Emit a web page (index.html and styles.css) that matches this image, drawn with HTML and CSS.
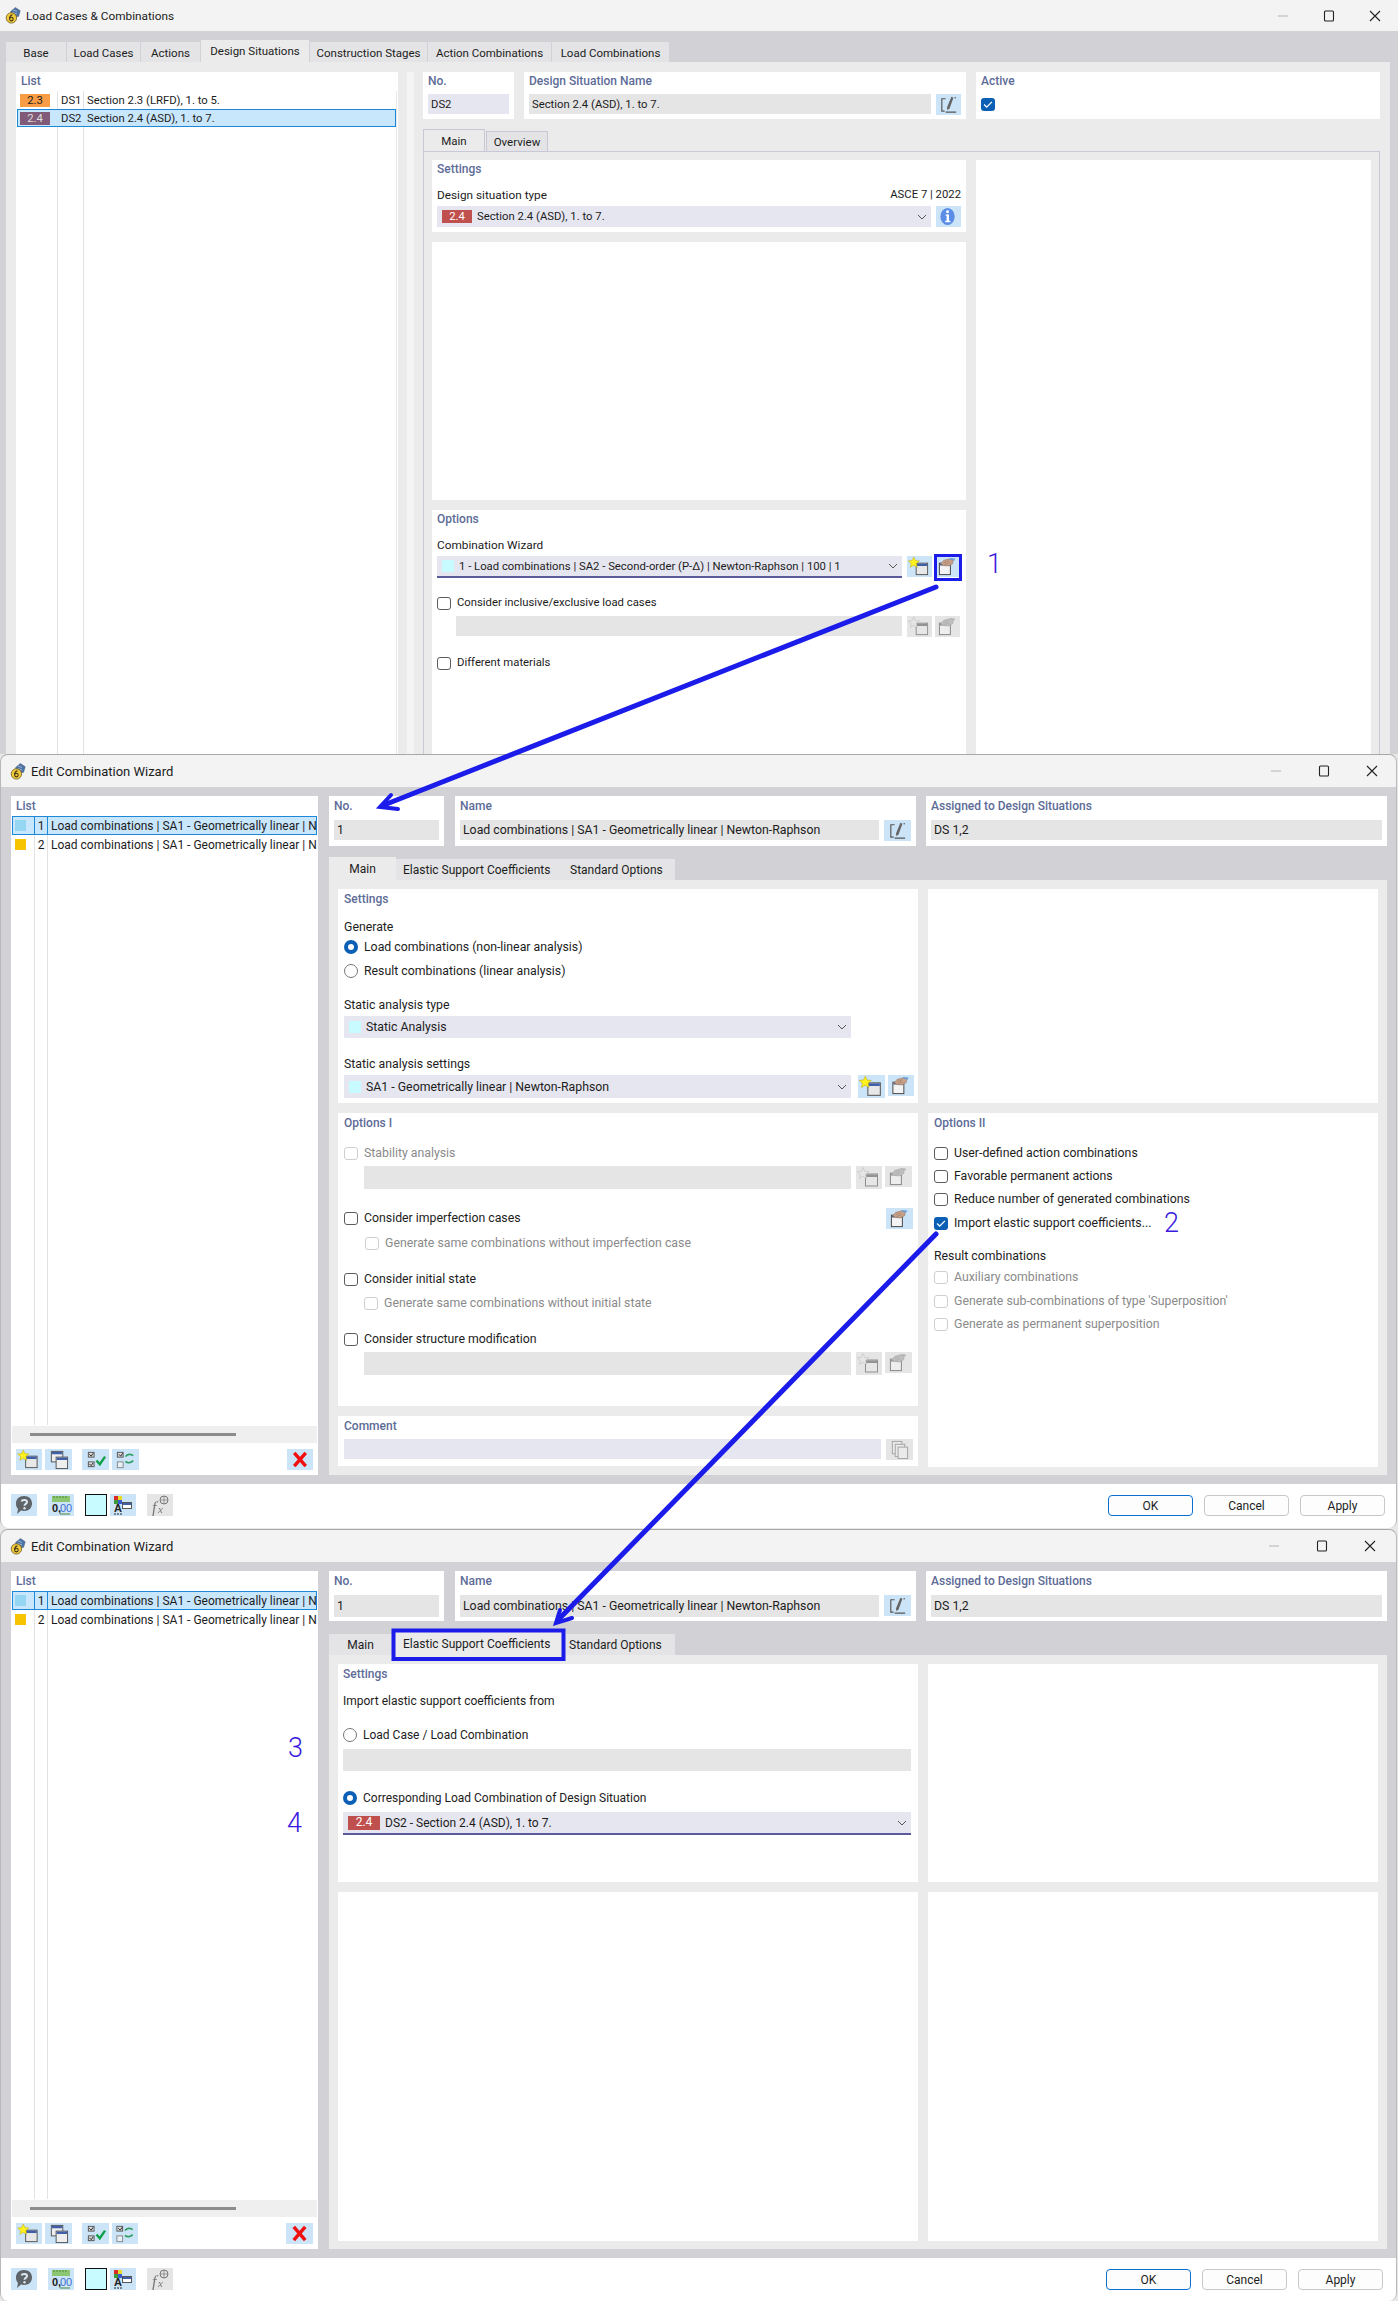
FILE: index.html
```html
<!DOCTYPE html>
<html lang="en">
<head>
    <meta charset="UTF-8">
    <title>Load Cases &amp; Combinations</title>
    <link rel="stylesheet" href="styles.css">
</head>
<body>
    <svg class="sprite" xmlns="http://www.w3.org/2000/svg">
        <symbol id="i-app" viewBox="0 0 20 22">
            <path d="M7 6 13 1l6 4-2 7-8 2z" fill="#4d74a8" stroke="#39506f" stroke-width=".6"/>
            <path d="M10 4l5 2M9 7l6 2" stroke="#c9d4e2" stroke-width=".8"/>
            <circle cx="8" cy="14" r="6.5" fill="#f1c93c" stroke="#6f5c1e"/>
            <circle cx="8" cy="15.5" r="2.2" fill="none" stroke="#3b3212" stroke-width="1.3"/>
            <path d="M5.8 15c0-3 1.400-4.500 3.500-5" fill="none" stroke="#3b3212" stroke-width="1.300"/>
        </symbol>
        <symbol id="i-new" viewBox="0 0 26 22">
            <rect x="9.500" y="7.500" width="12" height="12" fill="#e8e8e8" stroke="#555"/>
            <rect x="10" y="8" width="11" height="2.500" fill="#3f5fa8"/>
            <path d="M7 1l1.700 3.800 4.100.4-3.100 2.700.9 4-3.600-2.100-3.600 2.100.9-4L1.200 5.200l4.100-.4z" fill="#fff21e" stroke="#b9a400" stroke-width=".5"/>
        </symbol>
        <symbol id="i-lib" viewBox="0 0 26 22">
            <rect x="4.500" y="7.500" width="11.500" height="12" fill="#f4f4f4" stroke="#444"/>
            <rect x="5" y="8" width="10.500" height="2" fill="#5a6478"/>
            <path d="M6 8l3-3.500L15 3l4 1-.5 4-4.500 2.500L9 10z" fill="#c8a087" stroke="#8a6f60" stroke-width=".5"/>
            <path d="M9 7l5-2M10 9l5-2" stroke="#8a6f60" stroke-width=".5"/>
            <path d="M15 2l6 .5-1 2.500-4-1z" fill="#6f9fd8"/>
        </symbol>
        <symbol id="i-edit" viewBox="0 0 26 22">
            <path d="M10 5H6v13h3M10 19h11" fill="none" stroke="#555" stroke-width="1.200"/>
            <path d="M16 3l2.200 1-4 11-2.500 2-.2-3z" fill="#666"/>
            <circle cx="20" cy="4" r=".8" fill="#555"/>
        </symbol>
        <symbol id="i-info" viewBox="0 0 26 22">
            <ellipse cx="12" cy="11" rx="7.500" ry="9" fill="#5c8de6"/>
            <rect x="11" y="9" width="2.500" height="7.500" fill="#fff"/>
            <rect x="9.500" y="15.500" width="5.500" height="1.500" fill="#fff"/>
            <rect x="10" y="9" width="3" height="1.200" fill="#fff"/>
            <circle cx="12" cy="6" r="1.500" fill="#fff"/>
        </symbol>
        <symbol id="i-copy" viewBox="0 0 26 22">
            <rect x="5.500" y="2.500" width="12" height="11" fill="#eee" stroke="#555"/>
            <rect x="6" y="3" width="11" height="2.500" fill="#3f5fa8"/>
            <rect x="10.500" y="8.500" width="12" height="12" fill="#eee" stroke="#555"/>
            <rect x="11" y="9" width="11" height="2.500" fill="#3f5fa8"/>
        </symbol>
        <symbol id="i-checks" viewBox="0 0 26 22">
            <rect x="5.500" y="3.500" width="6" height="5" fill="#ddd" stroke="#555"/>
            <rect x="5.500" y="13.500" width="6" height="5" fill="#ddd" stroke="#555"/>
            <path d="M6.500 5.500l2 2 2-3M6.500 15.500l2 2 2-3" fill="none" stroke="#222"/>
            <path d="M14 12l3.500 4L23 8" fill="none" stroke="#12a14b" stroke-width="2.500"/>
        </symbol>
        <symbol id="i-swap" viewBox="0 0 26 22">
            <rect x="4.500" y="3.500" width="6" height="5" fill="#ddd" stroke="#555"/>
            <rect x="4.500" y="13.500" width="6" height="6" fill="#e8f1f8" stroke="#888"/>
            <path d="M6 5.500l2 2 2-3" fill="none" stroke="#222"/>
            <path d="M13 8c2-3 6-3 8-1M21 12c-2 3-6 3-8 1" fill="none" stroke="#2f9e62" stroke-width="1.800"/>
        </symbol>
        <symbol id="i-del" viewBox="0 0 26 22">
            <path d="M7 4l12 14M19 4 7 18" stroke="#f01010" stroke-width="3.600"/>
        </symbol>
        <symbol id="i-help" viewBox="0 0 26 22">
            <path d="M13 2c5 0 8 3 8 7.500S18 17 13 17c-1 0-2 0-3-.4L6 20l1-5c-1.500-1.500-2-3.500-2-5.500C5 5 8 2 13 2z" fill="#5e6468"/>
            <path d="M10.500 7.500c.5-2 5.500-2 5.500.5 0 2-2.500 1.800-2.500 3.800" fill="none" stroke="#dbe6ef" stroke-width="2"/>
            <circle cx="13.500" cy="14.300" r="1.200" fill="#dbe6ef"/>
        </symbol>
        <symbol id="i-docs" viewBox="0 0 26 22">
            <rect x="5.500" y="2.500" width="10" height="13" fill="#eee" stroke="#777"/>
            <rect x="8.500" y="5.500" width="10" height="13" fill="#eee" stroke="#777"/>
            <rect x="11.500" y="8.500" width="10" height="12" fill="#eee" stroke="#777"/>
        </symbol>
        <symbol id="i-chev" viewBox="0 0 10 6">
            <path d="M1 1l4 4 4-4" fill="none" stroke="#555"/>
        </symbol>
        <symbol id="i-min" viewBox="0 0 12 12"><path d="M1 6h10" stroke="#b5b5b5"/></symbol>
        <symbol id="i-max" viewBox="0 0 12 12"><rect x="1.500" y="1" width="9" height="10" rx="1" fill="none" stroke="#222" stroke-width="1.100"/></symbol>
        <symbol id="i-close" viewBox="0 0 12 12"><path d="M1 1l10 10M11 1 1 11" stroke="#222" stroke-width="1.100"/></symbol>
        <symbol id="i-tick" viewBox="0 0 10 10"><path d="M2 5l2 2 4-4" fill="none" stroke="#fff"/></symbol>
    </svg>

    <!-- Load Cases & Combinations -->
    <section class="window win-main">
        <div class="titlebar">
            <svg class="app-icon"><use href="#i-app"/></svg>
            <span class="title">Load Cases &amp; Combinations</span>
            <div class="controls ctl-46">
                <svg><use href="#i-min"/></svg><svg><use href="#i-max"/></svg><svg><use href="#i-close"/></svg>
            </div>
        </div>
        <div class="main-tabs">
            <div class="tab w61">Base</div>
            <div class="tab w74">Load Cases</div>
            <div class="tab w60">Actions</div>
            <div class="tab w109 active">Design Situations</div>
            <div class="tab w118">Construction Stages</div>
            <div class="tab w124">Action Combinations</div>
            <div class="tab w118">Load Combinations</div>
        </div>
        <div class="main-body">
            <div class="panel list-panel list-382">
                <div class="panel-title">List</div>
                <div class="list-body lines-main">
                    <div class="row-main">
                        <span class="badge orange">2.3</span><span class="ds">DS1</span><span>Section 2.3 (LRFD), 1. to 5.</span>
                    </div>
                    <div class="row-main selected">
                        <span class="badge plum">2.4</span><span class="ds">DS2</span><span>Section 2.4 (ASD), 1. to 7.</span>
                    </div>
                </div>
            </div>
            <div class="splitter"></div>
            <div class="main-right">
                <div class="top-row">
                    <div class="panel no-main">
                        <div class="panel-title">No.</div>
                        <div class="field lilac mt4">DS2</div>
                    </div>
                    <div class="panel name-main">
                        <div class="panel-title">Design Situation Name</div>
                        <div class="field-row mt4">
                            <div class="field w402">Section 2.4 (ASD), 1. to 7.</div>
                            <div class="btn w25"><svg><use href="#i-edit"/></svg></div>
                        </div>
                    </div>
                    <div class="panel grow">
                        <div class="panel-title">Active</div>
                        <div class="check on mt8"><svg><use href="#i-tick"/></svg></div>
                    </div>
                </div>
                <div class="inner-tabs">
                    <div class="itab itab-on">Main</div>
                    <div class="itab">Overview</div>
                </div>
                <div class="inner-pane">
                    <div class="col-534">
                        <div class="panel h72">
                            <div class="panel-title">Settings</div>
                            <div class="cap-row mt9"><span>Design situation type</span><span>ASCE 7 | 2022</span></div>
                            <div class="field-row mt3">
                                <div class="select w494">
                                    <span class="badge red">2.4</span><span>Section 2.4 (ASD), 1. to 7.</span>
                                    <svg class="chev"><use href="#i-chev"/></svg>
                                </div>
                                <div class="btn w25"><svg><use href="#i-info"/></svg></div>
                            </div>
                        </div>
                        <div class="panel h258"></div>
                        <div class="panel grow">
                            <div class="panel-title">Options</div>
                            <div class="cap mt9">Combination Wizard</div>
                            <div class="field-row mt3">
                                <div class="select under w465">
                                    <span class="swatch"></span><span>1 - Load combinations | SA2 - Second-order (P-Δ) | Newton-Raphson | 100 | 1</span>
                                    <svg class="chev"><use href="#i-chev"/></svg>
                                </div>
                                <div class="btn w25"><svg><use href="#i-new"/></svg></div>
                                <div class="btn w25 tight"><svg><use href="#i-lib"/></svg></div>
                            </div>
                            <label class="opt mt17"><span class="check"></span>Consider inclusive/exclusive load cases</label>
                            <div class="field-row mt5 ml19">
                                <div class="field w446"></div>
                                <div class="btn w25 off"><svg><use href="#i-new"/></svg></div>
                                <div class="btn w25 off tight"><svg><use href="#i-lib"/></svg></div>
                            </div>
                            <label class="opt mt18"><span class="check"></span>Different materials</label>
                        </div>
                    </div>
                    <div class="panel grow"></div>
                </div>
            </div>
        </div>
    </section>

    <!-- Edit Combination Wizard, Main tab -->
    <section class="window win-edit">
        <div class="titlebar tall">
            <svg class="app-icon"><use href="#i-app"/></svg>
            <span class="title">Edit Combination Wizard</span>
            <div class="controls ctl-48">
                <svg><use href="#i-min"/></svg><svg><use href="#i-max"/></svg><svg><use href="#i-close"/></svg>
            </div>
        </div>
        <div class="edit-body">
            <div class="panel list-panel list-307">
                <div class="panel-title tall-title">List</div>
                <div class="list-body lines-edit">
                    <div class="row-edit selected"><span class="sq sky"></span><span class="num">1</span><span class="row-text">Load combinations | SA1 - Geometrically linear | N</span></div>
                    <div class="row-edit"><span class="sq amber"></span><span class="num">2</span><span class="row-text">Load combinations | SA1 - Geometrically linear | N</span></div>
                </div>
                <div class="hscroll"><div class="hthumb"></div></div>
                <div class="list-tools">
                    <div class="btn w26"><svg><use href="#i-new"/></svg></div>
                    <div class="btn w27"><svg><use href="#i-copy"/></svg></div>
                    <div class="btn w27 ml10"><svg><use href="#i-checks"/></svg></div>
                    <div class="btn w27"><svg><use href="#i-swap"/></svg></div>
                    <div class="btn w26 push"><svg><use href="#i-del"/></svg></div>
                </div>
            </div>
            <div class="edit-right">
                <div class="top-row edit-top">
                    <div class="panel no-edit pad5">
                        <div class="panel-title tall-title">No.</div>
                        <div class="field mt4">1</div>
                    </div>
                    <div class="panel name-edit pad5">
                        <div class="panel-title tall-title">Name</div>
                        <div class="field-row mt4">
                            <div class="field w419">Load combinations | SA1 - Geometrically linear | Newton-Raphson</div>
                            <div class="btn w27"><svg><use href="#i-edit"/></svg></div>
                        </div>
                    </div>
                    <div class="panel grow pad5">
                        <div class="panel-title tall-title">Assigned to Design Situations</div>
                        <div class="field mt4">DS 1,2</div>
                    </div>
                </div>
                <div class="edit-tabs">
                    <div class="etab etab-main active">Main</div>
                    <div class="etab etab-elastic">Elastic Support Coefficients</div>
                    <div class="etab etab-std">Standard Options</div>
                </div>
                <div class="edit-pane">
                    <div class="col-580">
                        <div class="panel h214">
                            <div class="panel-title">Settings</div>
                            <div class="cap mt12">Generate</div>
                            <label class="opt mt4"><span class="radio on"></span>Load combinations (non-linear analysis)</label>
                            <label class="opt mt8"><span class="radio"></span>Result combinations (linear analysis)</label>
                            <div class="cap mt18">Static analysis type</div>
                            <div class="select h22 w507 mt3">
                                <span class="swatch"></span><span>Static Analysis</span>
                                <svg class="chev"><use href="#i-chev"/></svg>
                            </div>
                            <div class="cap mt18">Static analysis settings</div>
                            <div class="field-row mt3">
                                <div class="select h23 w507">
                                    <span class="swatch"></span><span>SA1 - Geometrically linear | Newton-Raphson</span>
                                    <svg class="chev"><use href="#i-chev"/></svg>
                                </div>
                                <div class="btn w27 ml2"><svg><use href="#i-new"/></svg></div>
                                <div class="btn w26 tight"><svg><use href="#i-lib"/></svg></div>
                            </div>
                        </div>
                        <div class="panel h293">
                            <div class="panel-title">Options I</div>
                            <label class="opt mt14 dim"><span class="check"></span>Stability analysis</label>
                            <div class="field-row mt5 ml20">
                                <div class="field h23 w487"></div>
                                <div class="btn w26 off"><svg><use href="#i-new"/></svg></div>
                                <div class="btn w27 off tight"><svg><use href="#i-lib"/></svg></div>
                            </div>
                            <div class="opt-btn mt18">
                                <label class="opt"><span class="check"></span>Consider imperfection cases</label>
                                <div class="btn w27"><svg><use href="#i-lib"/></svg></div>
                            </div>
                            <label class="opt mt6 ml21 dim"><span class="check"></span>Generate same combinations without imperfection case</label>
                            <label class="opt mt20"><span class="check"></span>Consider initial state</label>
                            <label class="opt mt8 ml20 dim"><span class="check"></span>Generate same combinations without initial state</label>
                            <label class="opt mt20"><span class="check"></span>Consider structure modification</label>
                            <div class="field-row mt5 ml20">
                                <div class="field h23 w487"></div>
                                <div class="btn w26 off"><svg><use href="#i-new"/></svg></div>
                                <div class="btn w27 off tight"><svg><use href="#i-lib"/></svg></div>
                            </div>
                        </div>
                        <div class="panel h50">
                            <div class="panel-title">Comment</div>
                            <div class="field-row mt5">
                                <div class="field lilac w537"></div>
                                <div class="btn w27 off"><svg><use href="#i-docs"/></svg></div>
                            </div>
                        </div>
                    </div>
                    <div class="col-450">
                        <div class="panel h214"></div>
                        <div class="panel grow">
                            <div class="panel-title">Options II</div>
                            <label class="opt mt14"><span class="check"></span>User-defined action combinations</label>
                            <label class="opt mt7"><span class="check"></span>Favorable permanent actions</label>
                            <label class="opt mt7"><span class="check"></span>Reduce number of generated combinations</label>
                            <label class="opt mt8"><span class="check on"><svg><use href="#i-tick"/></svg></span>Import elastic support coefficients...</label>
                            <div class="cap mt17">Result combinations</div>
                            <label class="opt mt5 dim"><span class="check"></span>Auxiliary combinations</label>
                            <label class="opt mt8 dim"><span class="check"></span>Generate sub-combinations of type 'Superposition'</label>
                            <label class="opt mt7 dim"><span class="check"></span>Generate as permanent superposition</label>
                        </div>
                    </div>
                </div>
            </div>
        </div>
        <div class="footer">
            <div class="btn w26"><svg><use href="#i-help"/></svg></div>
            <div class="btn w26 ml11">
                <svg viewBox="0 0 26 22">
                    <rect x="4" y="2" width="18" height="6" fill="#8cc672"/>
                    <path d="M6 2v2M9 2v2M12 2v2M15 2v2M18 2v2M12 20h10" stroke="#4d8a38"/>
                    <text x="4" y="18" class="svg-num">0,</text>
                    <text x="12" y="18" class="svg-num link">00</text>
                </svg>
            </div>
            <div class="color-btn"></div>
            <div class="btn w26">
                <svg viewBox="0 0 26 22">
                    <rect x="4" y="2" width="4" height="4" fill="#d92a2a"/>
                    <rect x="8" y="2" width="4" height="4" fill="#e8d92a"/>
                    <rect x="4" y="6" width="4" height="4" fill="#3a9a3a"/>
                    <rect x="8" y="6" width="4" height="4" fill="#3a5ad0"/>
                    <text x="4" y="18" class="svg-num">A</text>
                    <path d="M4 20h2M7 20h2M10 20h2" stroke="#222"/>
                    <rect x="12.500" y="8.500" width="9" height="6" fill="#fff" stroke="#555"/>
                    <rect x="13" y="9" width="8" height="2" fill="#3f5fa8"/>
                </svg>
            </div>
            <div class="btn w26 off ml11 plain-off">
                <svg viewBox="0 0 26 22">
                    <text x="5" y="19" class="svg-f">f</text>
                    <text x="11" y="19" class="svg-x">x</text>
                    <circle cx="17" cy="6" r="4" fill="none" stroke="#777"/>
                    <path d="M13 6h8M17 2v8" stroke="#777" stroke-width=".7"/>
                </svg>
            </div>
            <div class="dlg-buttons">
                <div class="dlg ok">OK</div>
                <div class="dlg">Cancel</div>
                <div class="dlg">Apply</div>
            </div>
        </div>
    </section>

    <!-- Edit Combination Wizard, Elastic Support Coefficients tab -->
    <section class="window win-edit win-third">
        <div class="titlebar tall">
            <svg class="app-icon"><use href="#i-app"/></svg>
            <span class="title">Edit Combination Wizard</span>
            <div class="controls ctl-48 ctl-left">
                <svg><use href="#i-min"/></svg><svg><use href="#i-max"/></svg><svg><use href="#i-close"/></svg>
            </div>
        </div>
        <div class="edit-body">
            <div class="panel list-panel list-307">
                <div class="panel-title tall-title">List</div>
                <div class="list-body lines-edit">
                    <div class="row-edit selected"><span class="sq sky"></span><span class="num">1</span><span class="row-text">Load combinations | SA1 - Geometrically linear | N</span></div>
                    <div class="row-edit"><span class="sq amber"></span><span class="num">2</span><span class="row-text">Load combinations | SA1 - Geometrically linear | N</span></div>
                </div>
                <div class="hscroll"><div class="hthumb"></div></div>
                <div class="list-tools">
                    <div class="btn w26"><svg><use href="#i-new"/></svg></div>
                    <div class="btn w27"><svg><use href="#i-copy"/></svg></div>
                    <div class="btn w27 ml10"><svg><use href="#i-checks"/></svg></div>
                    <div class="btn w26"><svg><use href="#i-swap"/></svg></div>
                    <div class="btn w27 push"><svg><use href="#i-del"/></svg></div>
                </div>
            </div>
            <div class="edit-right">
                <div class="top-row edit-top">
                    <div class="panel no-edit pad5">
                        <div class="panel-title tall-title">No.</div>
                        <div class="field mt4 h22">1</div>
                    </div>
                    <div class="panel name-edit pad5">
                        <div class="panel-title tall-title">Name</div>
                        <div class="field-row mt4">
                            <div class="field h22 w419">Load combinations | SA1 - Geometrically linear | Newton-Raphson</div>
                            <div class="btn w27"><svg><use href="#i-edit"/></svg></div>
                        </div>
                    </div>
                    <div class="panel grow pad5">
                        <div class="panel-title tall-title">Assigned to Design Situations</div>
                        <div class="field mt4 h22">DS 1,2</div>
                    </div>
                </div>
                <div class="edit-tabs">
                    <div class="etab etab-main3">Main</div>
                    <div class="etab etab-elastic3 active">Elastic Support Coefficients</div>
                    <div class="etab etab-std3">Standard Options</div>
                </div>
                <div class="edit-pane">
                    <div class="col-580">
                        <div class="panel h218 pad5">
                            <div class="panel-title">Settings</div>
                            <div class="cap mt11">Import elastic support coefficients from</div>
                            <label class="opt mt18"><span class="radio"></span>Load Case / Load Combination</label>
                            <div class="field h22 w568 mt6"></div>
                            <label class="opt mt19"><span class="radio on"></span>Corresponding Load Combination of Design Situation</label>
                            <div class="select under h23 w568 mt6">
                                <span class="badge red wide">2.4</span><span>DS2 - Section 2.4 (ASD), 1. to 7.</span>
                                <svg class="chev"><use href="#i-chev"/></svg>
                            </div>
                        </div>
                        <div class="panel grow"></div>
                    </div>
                    <div class="col-450">
                        <div class="panel h218"></div>
                        <div class="panel grow"></div>
                    </div>
                </div>
            </div>
        </div>
        <div class="footer footer-third">
            <div class="btn w26"><svg><use href="#i-help"/></svg></div>
            <div class="btn w26 ml11">
                <svg viewBox="0 0 26 22">
                    <rect x="4" y="2" width="18" height="6" fill="#8cc672"/>
                    <path d="M6 2v2M9 2v2M12 2v2M15 2v2M18 2v2M12 20h10" stroke="#4d8a38"/>
                    <text x="4" y="18" class="svg-num">0,</text>
                    <text x="12" y="18" class="svg-num link">00</text>
                </svg>
            </div>
            <div class="color-btn"></div>
            <div class="btn w26">
                <svg viewBox="0 0 26 22">
                    <rect x="4" y="2" width="4" height="4" fill="#d92a2a"/>
                    <rect x="8" y="2" width="4" height="4" fill="#e8d92a"/>
                    <rect x="4" y="6" width="4" height="4" fill="#3a9a3a"/>
                    <rect x="8" y="6" width="4" height="4" fill="#3a5ad0"/>
                    <text x="4" y="18" class="svg-num">A</text>
                    <path d="M4 20h2M7 20h2M10 20h2" stroke="#222"/>
                    <rect x="12.500" y="8.500" width="9" height="6" fill="#fff" stroke="#555"/>
                    <rect x="13" y="9" width="8" height="2" fill="#3f5fa8"/>
                </svg>
            </div>
            <div class="btn w26 off ml11 plain-off">
                <svg viewBox="0 0 26 22">
                    <text x="5" y="19" class="svg-f">f</text>
                    <text x="11" y="19" class="svg-x">x</text>
                    <circle cx="17" cy="6" r="4" fill="none" stroke="#777"/>
                    <path d="M13 6h8M17 2v8" stroke="#777" stroke-width=".7"/>
                </svg>
            </div>
            <div class="dlg-buttons">
                <div class="dlg ok">OK</div>
                <div class="dlg">Cancel</div>
                <div class="dlg">Apply</div>
            </div>
        </div>
    </section>

    <!-- Blue annotations drawn over the screenshots -->
    <svg class="annot" viewBox="0 0 1398 2301" xmlns="http://www.w3.org/2000/svg">
        <g fill="none" stroke="#1b1bea" stroke-linecap="round">
            <rect x="935.500" y="555.500" width="25" height="24" stroke-width="3" stroke-linecap="butt"/>
            <rect x="393.500" y="1630.500" width="170" height="28.500" stroke-width="4" stroke-linecap="butt"/>
            <path d="M936 587 384 805" stroke-width="5"/>
            <path d="M391 795 380 807 398 809" stroke-width="4"/>
            <path d="M936 1234 558 1620" stroke-width="5"/>
            <path d="M560 1610 556 1623 572 1618" stroke-width="4"/>
        </g>
    </svg>
    <span class="mark mark-1">1</span>
    <span class="mark mark-2">2</span>
    <span class="mark mark-3">3</span>
    <span class="mark mark-4">4</span>
</body>
</html>
```
FILE: styles.css
```css
* {
    margin: 0;
    padding: 0;
    box-sizing: border-box;
}

body {
    position: relative;
    width: 1398px;
    height: 2301px;
    overflow: hidden;
    background: #e8e8e8;
    font-family: Roboto, "Liberation Sans", sans-serif;
    font-size: 12.300px;
    color: #1c1c1c;
}

.sprite {
    position: absolute;
    width: 0;
    height: 0;
}

/* windows */
.window {
    display: flex;
    flex-direction: column;
    background: #d2d2d6;
}

.win-main {
    height: 754px;
    font-size: 11.300px;
}

.win-main .cap,
.win-main .cap-row {
    font-size: 11.800px;
}

.win-main .cap-row span:last-child {
    font-size: 11.300px;
}

.win-main .title {
    font-size: 11.800px;
}

.win-edit {
    height: 774px;
    border-top: 1px solid #a8a8a8;
    border-left: 1px solid #b8b8b8;
    border-right: 1px solid #b8b8b8;
    border-radius: 8px 8px 8px 8px;
    overflow: hidden;
    margin-right: 1px;
}

.win-third {
    height: 772px;
    margin-top: 1px;
    font-size: 12px;
}

.win-third .edit-top {
    font-size: 12.300px;
}

.titlebar {
    display: flex;
    align-items: center;
    flex: none;
    height: 31px;
    padding-left: 5px;
    background: #f3f3f3;
}

.titlebar.tall {
    height: 32px;
    padding-left: 9px;
}

.app-icon {
    width: 16px;
    height: 19px;
}

.title {
    margin-left: 5px;
    font-size: 13px;
}

.controls {
    display: flex;
    margin-left: auto;
}

.controls svg {
    width: 46px;
    height: 12px;
}

.ctl-48 svg {
    width: 48px;
}

.ctl-left {
    margin-right: 2px;
}

/* top level tabs */
.main-tabs {
    display: flex;
    align-items: flex-end;
    flex: none;
    height: 31px;
    padding-left: 6px;
}

.tab {
    display: flex;
    align-items: center;
    justify-content: center;
    height: 20px;
    padding-top: 1px;
    background: #e4e4e6;
    border-right: 1px solid #d2d2d6;
    font-size: 11.500px;
}

.tab.active {
    height: 22px;
    padding-top: 0;
    background: #ebebeb;
}

.w61 { width: 61px; }
.w74 { width: 74px; }
.w60 { width: 60px; }
.w109 { width: 109px; }
.w118 { width: 118px; }
.w124 { width: 124px; }

.main-body {
    display: flex;
    flex: 1;
    min-height: 0;
    margin: 0 8px 0 6px;
    padding: 10px 10px 0;
    background: #ebebeb;
}

.splitter {
    flex: none;
    width: 25px;
    border-left: 9px solid #ebebeb;
    border-right: 9px solid #ebebeb;
    background: #f4f4f4;
}

.main-right {
    display: flex;
    flex-direction: column;
    flex: 1;
    min-width: 0;
}

/* panels */
.panel {
    flex: none;
    background: #fff;
    padding: 0 5px;
}

.panel.grow,
.grow {
    flex: 1;
    min-width: 0;
}

.pad5 {
    padding: 0 5px;
}

.panel-title {
    height: 18px;
    line-height: 18px;
    color: #5d6b97;
    font-size: 12px;
    font-weight: 500;
}

.edit-pane .panel-title {
    line-height: 20px;
}

.tall-title {
    height: 20px;
    line-height: 20px;
}

.list-panel {
    display: flex;
    flex-direction: column;
    padding: 0;
}

.list-panel .panel-title {
    padding-left: 5px;
}

.list-382 { width: 382px; }
.list-307 { width: 307px; flex: none; }

.list-body {
    flex: 1;
    margin: 1px 1px 0;
    background-repeat: no-repeat;
    background-size: 1px 100%;
    background-image: linear-gradient(#e2e2e2, #e2e2e2), linear-gradient(#e2e2e2, #e2e2e2);
}

.lines-main {
    background-position: 40px 0, 66px 0;
    border-right: 1px solid #e8e8e8;
}

.lines-edit {
    margin-top: 0;
    background-position: 22px 0, 35px 0;
}

.row-main {
    display: flex;
    align-items: center;
    height: 18px;
    padding-left: 3px;
}

.row-main.selected,
.row-edit.selected {
    background: #c8e6fc;
    outline: 1px solid #1e88d8;
    outline-offset: -1px;
}

.row-main .ds {
    width: 26px;
    margin-left: 11px;
}

.row-edit {
    display: flex;
    align-items: center;
    height: 19px;
    padding-left: 3px;
    font-size: 12px;
    white-space: nowrap;
    overflow: hidden;
}

.row-edit.selected .num {
    border-left: 1px solid #1e88d8;
    border-right: 1px solid #1e88d8;
}

.sq {
    flex: none;
    width: 11px;
    height: 11px;
    margin-right: 8px;
}

.sky { background: #95d6f2; }
.amber { background: #f6c400; }

.num {
    flex: none;
    width: 14px;
    line-height: 18px;
    text-align: center;
}

.row-text {
    margin-left: 3px;
}

.hscroll {
    flex: none;
    height: 17px;
    margin: 1px 1px 0;
    padding: 7px 0 0 18px;
    background: #efefef;
}

.hthumb {
    width: 206px;
    height: 3px;
    background: #8c8c8c;
}

.list-tools {
    display: flex;
    flex: none;
    gap: 3px;
    height: 32px;
    padding: 6px 5px 4px;
}

.push {
    margin-left: auto;
}

.badge {
    flex: none;
    width: 30px;
    height: 13px;
    line-height: 13px;
    text-align: center;
}

.orange { background: #f89c45; }
.plum { background: #805a78; color: #ddd; }
.red { background: #c0504d; color: #fff; margin-right: 5px; }
.wide { width: 32px; height: 14px; }

.swatch {
    flex: none;
    width: 12px;
    height: 12px;
    margin-right: 5px;
    background: #c8fbff;
}

/* fields */
.top-row {
    display: flex;
    flex: none;
    gap: 10px;
    height: 47px;
}

.no-main { width: 91px; }
.name-main { width: 442px; }
.no-edit { width: 115px; }
.name-edit { width: 461px; }

.field {
    display: flex;
    align-items: center;
    height: 20px;
    padding-left: 3px;
    background: #e5e5e5;
    white-space: nowrap;
}

.lilac { background: #e6e6f0; }

.select {
    display: flex;
    align-items: center;
    flex: none;
    height: 21px;
    padding: 0 4px 0 5px;
    background: #e6e6f0;
    white-space: nowrap;
}

.select.under {
    height: 22px;
    border-bottom: 2px solid #5b5b9b;
}

.chev {
    flex: none;
    width: 10px;
    height: 6px;
    margin-left: auto;
}

.field-row {
    display: flex;
    gap: 5px;
}

.btn {
    display: flex;
    flex: none;
    height: 21px;
    background: #cce4f7;
}

.btn svg {
    width: 100%;
    height: 100%;
}

.btn.off {
    background: #e5e5e5;
}

.btn.off svg {
    filter: grayscale(1);
    opacity: .6;
}

.btn.plain-off svg {
    opacity: 1;
}

.svg-num {
    font-family: "Liberation Sans", sans-serif;
    font-size: 11px;
    font-weight: 700;
    fill: #222;
}

.svg-num.link {
    font-weight: 400;
    fill: #3f6fd0;
}

.svg-f,
.svg-x {
    font-family: "Liberation Serif", serif;
    font-style: italic;
    fill: #777;
}

.svg-f { font-size: 16px; }
.svg-x { font-size: 11px; }

.tight {
    margin-left: -2px;
}

.w25 { width: 25px; }
.w26 { width: 26px; }
.w27 { width: 27px; }
.w402 { width: 402px; }
.w419 { width: 419px; }
.w446 { width: 446px; }
.w465 { width: 465px; }
.w487 { width: 487px; }
.w494 { width: 494px; }
.w507 { width: 507px; }
.w537 { width: 537px; }
.w568 { width: 568px; }

.h22 { height: 22px; }
.h23 { height: 23px; }

.select.h23 { height: 23px; }
.select.h22 { height: 22px; }
.field.h22 { height: 22px; }
.field.h23 { height: 23px; }
.h23 + .btn { height: 23px; }

/* text and options */
.cap,
.opt {
    height: 16px;
    line-height: 16px;
}

.cap-row {
    display: flex;
    justify-content: space-between;
    height: 16px;
    line-height: 16px;
}

.opt {
    display: flex;
    align-items: center;
    gap: 6px;
    white-space: nowrap;
}

.opt.dim {
    color: #8a8a8a;
}

.opt-btn {
    display: flex;
    align-items: center;
    justify-content: space-between;
    height: 22px;
}

.check {
    display: flex;
    flex: none;
    width: 14px;
    height: 13px;
    border: 1.500px solid #5c5c5c;
    border-radius: 3px;
    background: #fff;
}

.dim .check {
    border-color: #cfcfcf;
}

.check.on {
    border: none;
    background: #0b5fb5;
}

.check svg {
    width: 100%;
    height: 100%;
}

.radio {
    flex: none;
    width: 14px;
    height: 14px;
    border: 1.500px solid #777;
    border-radius: 50%;
    background: #fff;
}

.radio.on {
    border: 4px solid #0b5fb5;
}

.mt3 { margin-top: 3px; }
.mt4 { margin-top: 4px; }
.mt5 { margin-top: 5px; }
.mt6 { margin-top: 6px; }
.mt7 { margin-top: 7px; }
.mt8 { margin-top: 8px; }
.mt9 { margin-top: 9px; }
.mt11 { margin-top: 11px; }
.mt12 { margin-top: 12px; }
.mt14 { margin-top: 14px; }
.mt17 { margin-top: 17px; }
.mt18 { margin-top: 18px; }
.mt19 { margin-top: 19px; }
.mt20 { margin-top: 20px; }
.ml2 { margin-left: 2px; }
.ml10 { margin-left: 7px; }
.ml11 { margin-left: 11px; }
.ml19 { margin-left: 19px; }
.ml20 { margin-left: 20px; }
.ml21 { margin-left: 21px; }

/* tabs inside the first window */
.inner-tabs {
    display: flex;
    align-items: flex-end;
    flex: none;
    height: 22px;
    margin-top: 10px;
}

.itab {
    display: flex;
    align-items: center;
    justify-content: center;
    width: 62px;
    height: 20px;
    border: 1px solid #c8c8d4;
    border-bottom: none;
    background: #e4e4e6;
    font-size: 11.500px;
}

.itab-on {
    height: 22px;
    margin-right: 1px;
    background: #ebebeb;
}

.inner-pane {
    display: flex;
    flex: 1;
    gap: 10px;
    min-height: 0;
    padding: 8px 8px 0;
    border: 1px solid #c8c8d8;
    border-bottom: none;
}

.col-534 {
    display: flex;
    flex-direction: column;
    flex: none;
    gap: 10px;
    width: 534px;
}

.h72 { height: 72px; }
.h258 { height: 258px; }

/* edit wizard */
.edit-body {
    display: flex;
    flex: 1;
    min-height: 0;
    gap: 11px;
    padding: 9px 10px 9px 10px;
}

.edit-right {
    display: flex;
    flex-direction: column;
    flex: none;
    width: 1058px;
}

.edit-top {
    height: 50px;
}

.edit-top .panel:first-child {
    margin-right: 1px;
}

.edit-tabs {
    display: flex;
    align-items: flex-end;
    flex: none;
    height: 23px;
    margin-top: 11px;
}

.etab {
    display: flex;
    align-items: center;
    height: 21px;
    padding-top: 1px;
    background: #e4e4e6;
    font-size: 12px;
}

.etab.active {
    height: 23px;
    background: #ebebeb;
}

.etab-main { width: 67px; justify-content: center; }
.etab-elastic { width: 163px; padding-left: 7px; }
.etab-std { width: 116px; padding-left: 11px; }
.etab-main3 { width: 63px; justify-content: center; }
.etab-elastic3 { width: 174px; padding-left: 11px; }
.etab-std3 { width: 109px; padding-left: 3px; }

.edit-pane {
    display: flex;
    flex: 1;
    gap: 10px;
    min-height: 0;
    padding: 9px 9px 8px;
    background: #ebebeb;
}

.col-580,
.col-450 {
    display: flex;
    flex-direction: column;
    flex: none;
    gap: 10px;
}

.col-580 { width: 580px; }
.col-450 { width: 450px; }

.col-580 > .panel,
.col-450 > .panel {
    padding: 0 5px 0 6px;
}

.col-580 > .panel.pad5 {
    padding: 0 5px;
}

.h214 { height: 214px; }
.h293 { height: 293px; }
.h50 { height: 50px; }
.h218 { height: 218px; }

.footer {
    display: flex;
    flex: none;
    gap: 0;
    height: 44px;
    padding: 10px 11px 0 10px;
    background: #fff;
}

.footer .btn {
    height: 22px;
}

.footer-third {
    height: 43px;
    padding-right: 13px;
}

.color-btn {
    flex: none;
    width: 22px;
    height: 22px;
    margin: 0 3px 0 11px;
    border: 1.500px solid #111;
    background: #c8fbff;
}

.dlg-buttons {
    display: flex;
    gap: 11px;
    margin-top: 1px;
    margin-left: auto;
}

.dlg {
    display: flex;
    align-items: center;
    justify-content: center;
    width: 85px;
    height: 21px;
    border: 1px solid #c8c8c8;
    border-radius: 4px;
    background: #fdfdfd;
    font-size: 12px;
}

.dlg.ok {
    border: 1.500px solid #0b6fd0;
}

/* annotations */
.annot {
    position: absolute;
    top: 0;
    left: 0;
    width: 1398px;
    height: 2301px;
    pointer-events: none;
}

.mark {
    position: absolute;
    color: #3a1ae0;
    font-size: 27px;
    font-weight: 300;
    line-height: 28px;
}

.mark-1 { left: 987px; top: 550px; }
.mark-2 { left: 1164px; top: 1209px; }
.mark-3 { left: 288px; top: 1734px; }
.mark-4 { left: 287px; top: 1809px; }
```
